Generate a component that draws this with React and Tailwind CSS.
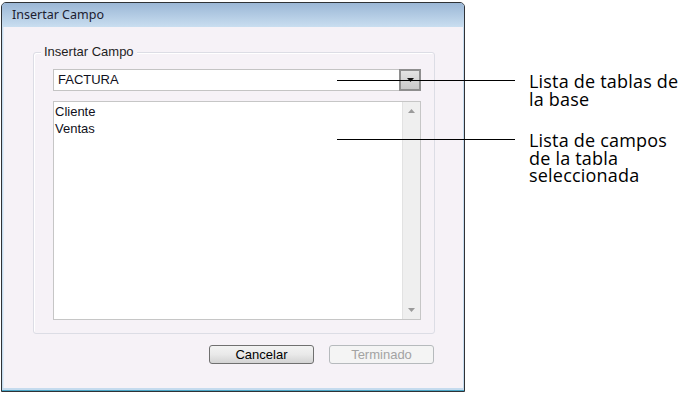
import React from 'react';

const arial = { fontFamily: '"Liberation Sans", Arial, sans-serif' };

const Callout = ({ top, lines }) => (
  <div className="absolute left-[337px] flex items-start" style={{ top }}>
    <div className="w-[178px] h-px bg-black mt-[8px]" />
    <div className="ml-[14px] text-[18px] leading-[17.5px] text-black font-['Open_Sans',sans-serif] mt-[1px] tracking-[0.2px]">
      {lines.map((l) => (
        <div key={l}>{l}</div>
      ))}
    </div>
  </div>
);

const App = () => {
  return (
    <div className="relative w-[685px] h-[394px] bg-white overflow-hidden">
      <div className="absolute left-[1px] top-[2px] w-[464px] h-[390px] border border-[#2f3236] rounded-t-[5px] bg-[#c5dbee] flex flex-col">
        <div className="h-[24px] rounded-t-[4px] bg-gradient-to-b from-[#9bb7d6] to-[#c9def0] flex items-center pl-[10px] text-[12.5px] text-[#1c2030] font-['Noto_Sans',sans-serif]">
          Insertar Campo
        </div>
        <div className="flex-1 mx-[1px] mb-[2px] bg-[#f6f2f7] border-l border-[#e3ecf6] flex flex-col" style={arial}>
          <div className="relative mt-[25px] ml-[29px] w-[402px] h-[282px] border border-[#dcdde5] rounded-[3px] shadow-[inset_1px_1px_0_#ffffff]">
            <div className="absolute -top-[9px] left-[7px] px-[3px] bg-[#f6f2f7] text-[13px] leading-[16px] text-[#1e1e1e]">
              Insertar Campo
            </div>
            <div className="mt-[16px] ml-[19px] w-[368px] h-[22px] flex border border-[#c4c4c4] bg-white">
              <div className="flex-1 pl-[4px] text-[13px] leading-[20px] text-[#101020]">FACTURA</div>
              <div className="w-[22px] -my-px -mr-px border-2 border-[#8e8e8e] bg-gradient-to-b from-[#e4e4e4] to-[#c9c9c9] flex items-center justify-center">
                <svg width="7" height="4" viewBox="0 0 7 4">
                  <path d="M0 0h7L3.5 4z" fill="#111" />
                </svg>
              </div>
            </div>
            <div className="mt-[10px] ml-[19px] w-[368px] h-[219px] flex border border-[#c6c6c6] bg-white">
              <div className="flex-1 pl-[1px] pt-[2px] text-[13px] leading-[16.5px] text-[#101020]">
                <div>Cliente</div>
                <div>Ventas</div>
              </div>
              <div className="w-[18px] bg-[#efefef] border-l border-[#e2e2e2] flex flex-col items-center justify-between py-[7px]">
                <svg width="7" height="4" viewBox="0 0 7 4">
                  <path d="M3.5 0L7 4H0z" fill="#9a9a9a" />
                </svg>
                <svg width="7" height="4" viewBox="0 0 7 4">
                  <path d="M0 0h7L3.5 4z" fill="#9a9a9a" />
                </svg>
              </div>
            </div>
          </div>
          <div className="flex justify-end gap-[15px] mt-[11px] mr-[29px]">
            <button className="w-[105px] h-[19px] border border-[#707070] rounded-[3px] bg-gradient-to-b from-[#f3f3f3] via-[#e9e9e9] to-[#d3d3d3] text-[13px] leading-[16px] text-black">
              Cancelar
            </button>
            <button className="w-[105px] h-[19px] border border-[#b6babd] rounded-[3px] bg-[#f4f4f4] text-[13px] leading-[16px] text-[#a3a3a3]">
              Terminado
            </button>
          </div>
        </div>
        <div className="h-[1px] bg-[#4ba6c6]" />
      </div>
      <Callout top={72} lines={['Lista de tablas de', 'la base']} />
      <Callout top={131} lines={['Lista de campos', 'de la tabla', 'seleccionada']} />
    </div>
  );
};

export default App;
